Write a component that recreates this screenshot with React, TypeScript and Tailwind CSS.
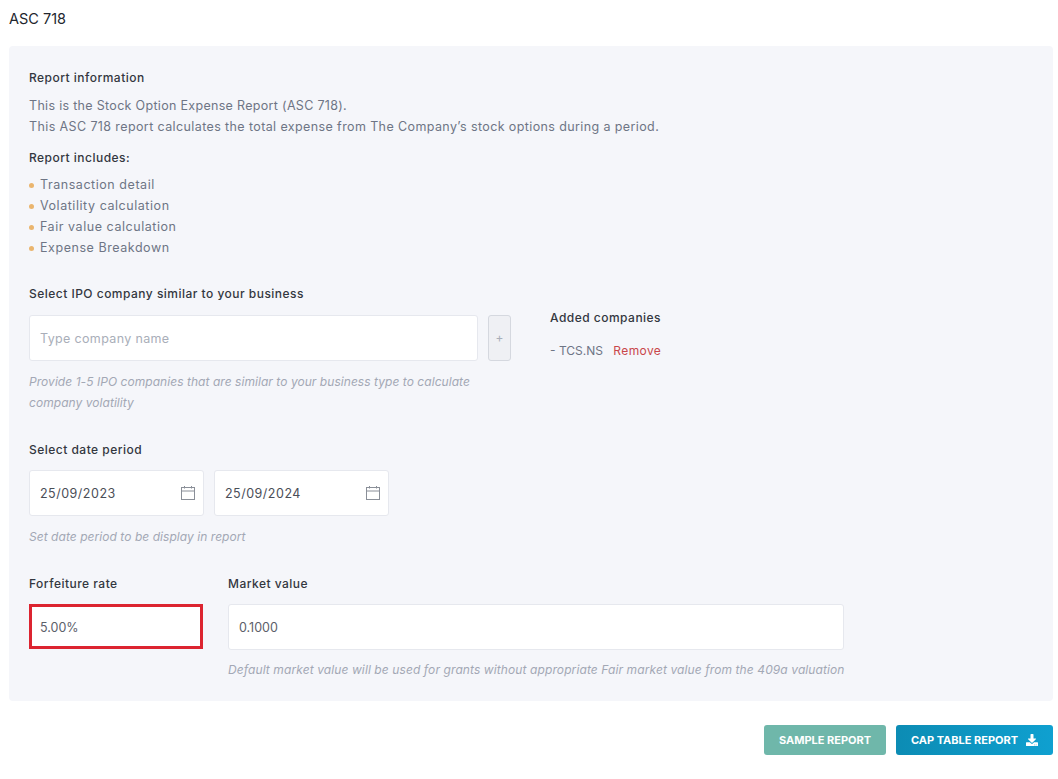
import { FaDownload } from 'react-icons/fa';

const font = { fontFamily: 'Inter, "Noto Sans", sans-serif' };

const CalendarIcon = () => (
  <svg width="16" height="16" viewBox="0 0 16 16" fill="none" stroke="#8a8f98" strokeWidth="1" className="shrink-0 -mt-[2px]">
    <rect x="1.5" y="2.5" width="13" height="12" />
    <path d="M1.5 6h13M4.5 1v2.5M11.5 1v2.5" />
  </svg>
);

const reportItems = ['Transaction detail', 'Volatility calculation', 'Fair value calculation', 'Expense Breakdown'];

export default function App() {
  return (
    <div style={font} className="w-[1058px] h-[779px] bg-white pl-[9px] pr-[5px] overflow-hidden">
      <h1 className="h-[46px] pt-[9px] text-[14.5px] leading-[20px] font-normal text-[#22262e]">ASC 718</h1>

      <div className="h-[655px] bg-[#f5f6fa] rounded-[4px] px-5 pt-[23px]">
        <p className="text-[12px] leading-[18px] font-medium text-[#33373f] tracking-[0.48px]">Report information</p>
        <div className="mt-[8px] text-[12.5px] leading-[21px] text-[#6e7585]">
          <p className="tracking-[0.31px]">This is the Stock Option Expense Report (ASC 718).</p>
          <p className="tracking-[0.39px]">This ASC 718 report calculates the total expense from The Company’s stock options during a period.</p>
        </div>
        <p className="mt-[12px] text-[12px] leading-[18px] font-medium text-[#33373f] tracking-[0.48px]">Report includes:</p>
        <ul className="mt-[7px] text-[12.5px] leading-[21px] text-[#6e7585] tracking-[0.55px]">
          {reportItems.map((item) => (
            <li key={item} className="flex items-center">
              <span className="w-[5px] h-[5px] mt-[2px] rounded-full bg-[#eab56e] mr-[6px]" />
              {item}
            </li>
          ))}
        </ul>

        <p className="mt-[27px] text-[12px] leading-[18px] font-medium text-[#33373f] tracking-[0.48px]">
          Select IPO company similar to your business
        </p>
        <div className="mt-[12px] flex">
          <div>
            <div className="flex">
              <div className="w-[449px] h-[46px] bg-white border border-[#e6e8ee] rounded-[3px] flex items-center px-[10px] pt-[2px] text-[12.5px] text-[#a9aeb9] tracking-[0.35px]">
                Type company name
              </div>
              <div className="ml-[10px] w-[23px] h-[46px] bg-[#eff0f4] border border-[#d5d8df] rounded-[3px] flex items-center justify-center text-[12px] text-[#a9aeb9]">
                +
              </div>
            </div>
            <p className="mt-[10px] w-[460px] text-[12px] leading-[21px] italic text-[#a3a8b5] tracking-[0.05px]">
              Provide 1-5 IPO companies that are similar to your business type to calculate company volatility
            </p>
          </div>
          <div className="ml-[39px] text-[12px]">
            <p className="leading-[18px] font-medium text-[#33373f] tracking-[0.48px] -mt-[6px]">Added companies</p>
            <p className="mt-[15px] leading-[18px] text-[#6e7585]">
              - TCS.NS <span className="ml-[7px] text-[#c9474a] tracking-[0.4px]">Remove</span>
            </p>
          </div>
        </div>

        <p className="mt-[28px] text-[12px] leading-[18px] font-medium text-[#33373f] tracking-[0.48px]">Select date period</p>
        <div className="mt-[11px] flex gap-[10px]">
          {['25/09/2023', '25/09/2024'].map((date) => (
            <div key={date} className="w-[175px] h-[46px] bg-white border border-[#e6e8ee] rounded-[3px] flex items-center justify-between pl-[10px] pr-[7px] pt-[2px] text-[12.5px] text-[#4a4e57] tracking-[0.5px]">
              {date}
              <CalendarIcon />
            </div>
          ))}
        </div>
        <p className="mt-[10px] text-[12px] leading-[21px] italic text-[#a3a8b5] tracking-[0.05px]">Set date period to be display in report</p>

        <div className="mt-[28px] flex gap-[25px]">
          <div>
            <p className="text-[12px] leading-[18px] font-medium text-[#33373f] tracking-[0.48px]">Forfeiture rate</p>
            <div className="mt-[11px] w-[174px] h-[45px] bg-white border-[3px] border-[#dc2430] flex items-center pl-[8px] pt-[3px] text-[12.5px] text-[#5c606a]">
              5.00%
            </div>
          </div>
          <div>
            <p className="text-[12px] leading-[18px] font-medium text-[#33373f] tracking-[0.48px]">Market value</p>
            <div className="mt-[11px] w-[616px] h-[46px] bg-white border border-[#e6e8ee] rounded-[3px] flex items-center pl-[10px] pt-[2px] text-[12.5px] text-[#5c606a]">
              0.1000
            </div>
            <p className="mt-[9px] text-[12px] leading-[21px] italic text-[#a3a8b5] tracking-[0.1px] whitespace-nowrap">
              Default market value will be used for grants without appropriate Fair market value from the 409a valuation
            </p>
          </div>
        </div>
      </div>

      <div className="mt-[24px] flex justify-end gap-[10px]">
        <button className="w-[122px] h-[30px] rounded-[3px] bg-[#6fb7aa] text-white text-[11px] font-bold">SAMPLE REPORT</button>
        <button className="w-[157px] h-[30px] rounded-[3px] bg-gradient-to-r from-[#0c8cb4] to-[#0fa0d0] text-white text-[11px] font-bold flex items-center justify-center gap-[8px]">
          CAP TABLE REPORT
          <FaDownload size={12} />
        </button>
      </div>
    </div>
  );
}
